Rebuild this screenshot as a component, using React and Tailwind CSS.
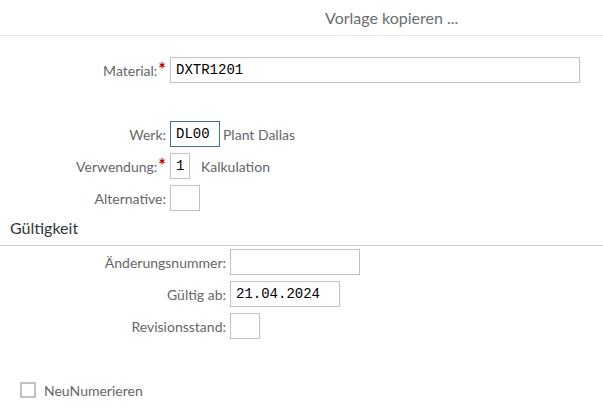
import { useState } from 'react';

const label = 'text-[14px] text-[#666666] text-right whitespace-nowrap';
const field = 'h-[26px] border bg-white px-[5px] text-[14px] text-black outline-none';
const grey = 'border-[#bfbfbf]';
const mono = { fontFamily: '"Liberation Mono", "DejaVu Sans Mono", monospace' };

export default function App() {
  const [checked, setChecked] = useState(false);

  return (
    <main
      className="h-[411px] w-[603px] overflow-hidden bg-white"
      style={{ fontFamily: 'Lato, "Open Sans", Arial, sans-serif' }}
    >
      <header className="flex h-[36px] items-center border-b border-[#e5e5e5] pl-[325px]">
        <h1 className="text-[16px] text-[#6a6d70]">Vorlage kopieren ...</h1>
      </header>

      <section className="mt-[21px] flex flex-col gap-[6px]">
        <Row labelWidth="w-[166px]" text="Material:" required>
          <input className={`${field} ${grey} w-[410px]`} style={mono} defaultValue="DXTR1201" />
        </Row>
        <div className="h-[26px]" />
        <Row labelWidth="w-[166px]" text="Werk:">
          <input
            className={`${field} w-[50px] border-[#3a6e9f]`}
            style={mono}
            defaultValue="DL00"
          />
          <span className="ml-[3px] text-[14px] text-[#666666]">Plant Dallas</span>
        </Row>
        <Row labelWidth="w-[166px]" text="Verwendung:" required>
          <input className={`${field} ${grey} w-[20px] px-[4px]`} style={mono} defaultValue="1" />
          <span className="ml-[11px] text-[14px] text-[#666666]">Kalkulation</span>
        </Row>
        <Row labelWidth="w-[166px]" text="Alternative:">
          <input className={`${field} ${grey} w-[30px]`} style={mono} defaultValue="" />
        </Row>
      </section>

      <div className="border-b border-[#cccccc] pb-[5px] pl-[10px] pt-[5px]">
        <h2 className="h-[24px] text-[16px] leading-[24px] text-[#32363a]">Gültigkeit</h2>
      </div>

      <section className="mt-[3px] flex flex-col gap-[6px]">
        <Row labelWidth="w-[226px]" text="Änderungsnummer:">
          <input className={`${field} ${grey} w-[130px]`} style={mono} defaultValue="" />
        </Row>
        <Row labelWidth="w-[226px]" text="Gültig ab:">
          <input className={`${field} ${grey} w-[110px]`} style={mono} defaultValue="21.04.2024" />
        </Row>
        <Row labelWidth="w-[226px]" text="Revisionsstand:">
          <input className={`${field} ${grey} w-[30px]`} style={mono} defaultValue="" />
        </Row>
      </section>

      <label className="mt-[43px] flex h-[16px] cursor-pointer items-center pl-[20px]">
        <input
          type="checkbox"
          className="sr-only"
          checked={checked}
          onChange={(event) => setChecked(event.target.checked)}
        />
        <span className="h-[16px] w-[16px] rounded-[1px] border-2 border-[#c2c2c2] bg-white" />
        <span className="ml-[8px] text-[14px] text-[#666666]">NeuNumerieren</span>
      </label>
    </main>
  );
}

function Row({ labelWidth, text, required, children }) {
  return (
    <div className="flex h-[26px] items-center">
      <div className={`${labelWidth} ${label} flex items-center justify-end`}>
        {text}
        {required && (
          <span className="ml-[1px] -mt-[3px] text-[18px] font-bold leading-none text-[#bb0000]">*</span>
        )}
      </div>
      <div className="ml-[4px] flex items-center">{children}</div>
    </div>
  );
}
